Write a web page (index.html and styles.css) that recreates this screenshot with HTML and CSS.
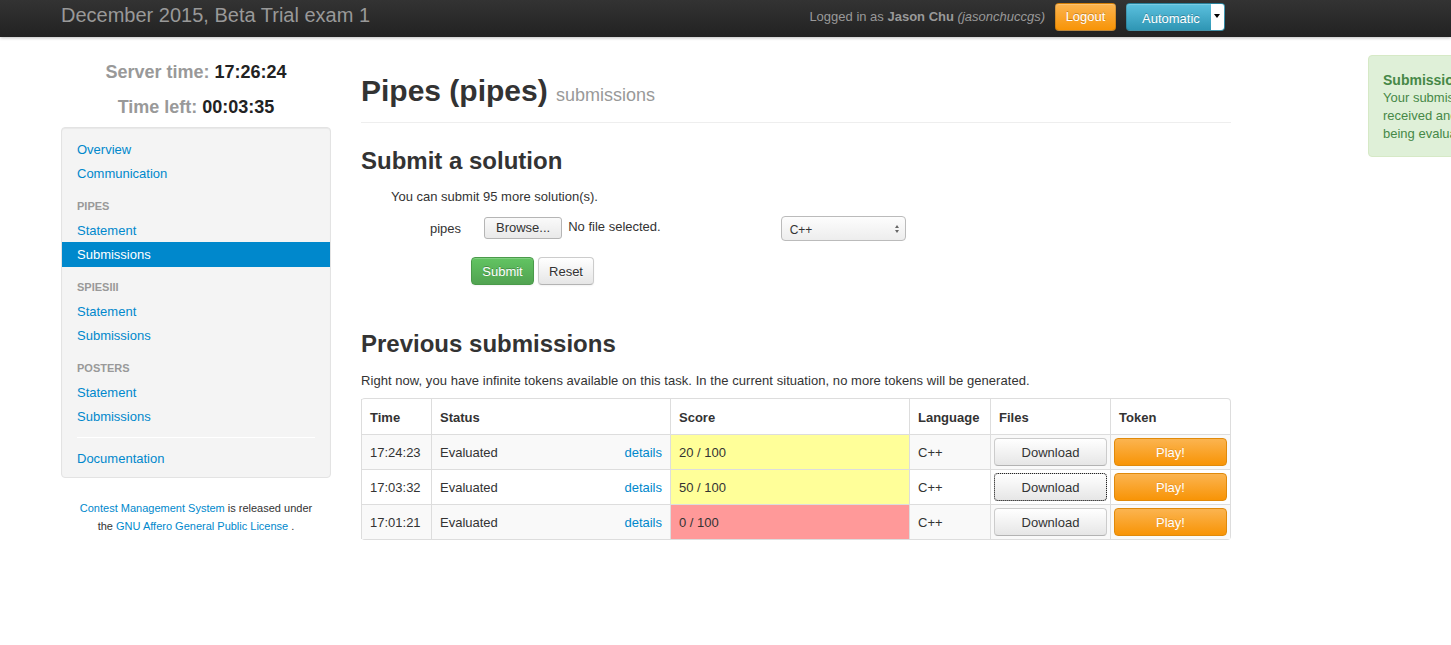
FILE: index.html
```html
<!DOCTYPE html>
<html>
<head>
<meta charset="utf-8">
<link rel="stylesheet" href="styles.css">
</head>
<body>
<div class="navbar">
  <div class="nav-inner">
    <div class="brand">December 2015, Beta Trial exam 1</div>
    <div class="nav-right">
      <span class="logged">Logged in as <b>Jason Chu</b> <i>(jasonchuccgs)</i></span>
      <span class="btn btn-warning btn-logout">Logout</span>
      <span class="btn btn-info btn-auto">Automatic<span class="caret-box"><span class="caret"></span></span></span>
    </div>
  </div>
</div>

<div class="notify">
  <div class="notify-title">Submission received</div>
  <div>Your submission has been received and is currently being evaluated.</div>
</div>

<div class="container">
  <div class="sidebar">
    <div class="clock"><span class="lbl">Server time:</span> 17:26:24</div>
    <div class="clock clock2"><span class="lbl">Time left:</span> 00:03:35</div>
    <div class="well">
      <a class="item">Overview</a>
      <a class="item">Communication</a>
      <div class="hdr">PIPES</div>
      <a class="item">Statement</a>
      <a class="item active">Submissions</a>
      <div class="hdr">SPIESIII</div>
      <a class="item">Statement</a>
      <a class="item">Submissions</a>
      <div class="hdr">POSTERS</div>
      <a class="item">Statement</a>
      <a class="item">Submissions</a>
      <div class="divider"></div>
      <a class="item">Documentation</a>
    </div>
    <div class="foot"><a>Contest Management System</a> is released under<br>the <a>GNU Affero General Public License</a> .</div>
  </div>

  <div class="main">
    <div class="page-header">
      <h1>Pipes (pipes) <small>submissions</small></h1>
    </div>
    <h2>Submit a solution</h2>
    <p class="remaining">You can submit 95 more solution(s).</p>
    <div class="form-row">
      <span class="flabel">pipes</span>
      <span class="browse">Browse...</span>
      <span class="nofile">No file selected.</span>
      <span class="select">C++<span class="arrows"><span class="up"></span><span class="down"></span></span></span>
    </div>
    <div class="actions">
      <span class="btn btn-success">Submit</span>
      <span class="btn btn-default">Reset</span>
    </div>

    <h2 class="prev">Previous submissions</h2>
    <p class="tokens">Right now, you have infinite tokens available on this task. In the current situation, no more tokens will be generated.</p>
    <table class="subs">
      <thead>
        <tr><th class="c-time">Time</th><th class="c-status">Status</th><th class="c-score">Score</th><th class="c-lang">Language</th><th class="c-files">Files</th><th class="c-token">Token</th></tr>
      </thead>
      <tbody>
        <tr class="odd"><td class="tx">17:24:23</td><td class="tx"><span class="st">Evaluated</span><a class="details">details</a></td><td class="tx partial">20 / 100</td><td class="tx">C++</td><td class="bt"><span class="dl">Download</span></td><td class="bt"><span class="play">Play!</span></td></tr>
        <tr><td class="tx">17:03:32</td><td class="tx"><span class="st">Evaluated</span><a class="details">details</a></td><td class="tx partial">50 / 100</td><td class="tx">C++</td><td class="bt"><span class="dl focus">Download</span></td><td class="bt"><span class="play">Play!</span></td></tr>
        <tr class="odd"><td class="tx">17:01:21</td><td class="tx"><span class="st">Evaluated</span><a class="details">details</a></td><td class="tx zero">0 / 100</td><td class="tx">C++</td><td class="bt"><span class="dl">Download</span></td><td class="bt"><span class="play">Play!</span></td></tr>
      </tbody>
    </table>
  </div>
</div>
</body>
</html>
```

FILE: styles.css
```css
* { box-sizing: border-box; }
html, body { margin: 0; padding: 0; }
body {
  font-family: "Liberation Sans", Arial, sans-serif;
  font-size: 13px;
  line-height: 18px;
  color: #333;
  background: #fff;
  overflow: hidden;
}
a { color: #0088cc; text-decoration: none; }

.navbar {
  height: 37px;
  background: linear-gradient(#333333, #222222);
  box-shadow: 0 1px 3px rgba(0,0,0,0.25);
}
.nav-inner {
  width: 1170px;
  margin-left: 61px;
  height: 37px;
  display: flex;
  align-items: center;
  justify-content: space-between;
}
.brand {
  font-size: 20px;
  color: #999;
  line-height: 28px;
  margin-top: -7px;
}
.nav-right {
  display: flex;
  align-items: center;
  margin-top: -3px;
  margin-right: 6px;
}
.logged { color: #999; font-size: 13px; margin-right: 10px; }
.logged b { color: #999; }
.btn {
  display: inline-flex;
  align-items: center;
  justify-content: center;
  height: 28px;
  padding: 0 10px;
  font-size: 13px;
  border-radius: 4px;
  border: 1px solid rgba(0,0,0,0.15);
  border-bottom-color: rgba(0,0,0,0.25);
  color: #fff;
  text-shadow: 0 -1px 0 rgba(0,0,0,0.25);
  box-shadow: inset 0 1px 0 rgba(255,255,255,0.2), 0 1px 2px rgba(0,0,0,0.05);
}
.btn-warning { background: linear-gradient(#fbb450, #f89406); }
.btn-logout { width: 61px; }
.btn-info { background: linear-gradient(#5bc0de, #2f96b4); }
.btn-auto {
  margin-left: 10px;
  width: 99px;
  justify-content: flex-start;
  padding: 4px 0 0 15px;
  position: relative;
}
.caret-box {
  position: absolute;
  right: 0;
  top: 0;
  bottom: 0;
  width: 13px;
  background: #fff;
  border-radius: 0 3px 3px 0;
}
.caret {
  position: absolute;
  left: 3px;
  top: 10px;
  border-left: 3px solid transparent;
  border-right: 3px solid transparent;
  border-top: 4px solid #000;
}

.notify {
  position: absolute;
  left: 1368px;
  top: 55px;
  width: 185px;
  height: 102px;
  padding: 15px 14px;
  background: #dff0d8;
  border: 1px solid #d6e9c6;
  border-radius: 4px;
  color: #468847;
  font-size: 13px;
  line-height: 18px;
}
.notify-title { font-weight: bold; font-size: 14px; white-space: nowrap; }

.container {
  margin-left: 61px;
  width: 1170px;
  display: flex;
  gap: 30px;
}
.sidebar { width: 270px; flex: none; }
.clock {
  text-align: center;
  font-size: 18px;
  font-weight: bold;
  color: #222;
  margin-top: 25px;
  line-height: 20px;
}
.clock2 { margin-top: 15px; }
.clock .lbl { color: #999; }
.well {
  margin-top: 10px;
  background: #f4f4f4;
  border: 1px solid #e3e3e3;
  border-radius: 4px;
  box-shadow: inset 0 1px 1px rgba(0,0,0,0.05);
  padding: 10px 0 6px;
}
.item {
  display: block;
  padding: 3px 15px;
  line-height: 18px;
  font-size: 13px;
  color: #0088cc;
}
.item.active {
  background: #0088cc;
  color: #fff;
  padding: 4px 15px 3px;
  margin-top: -1px;
}
.hdr {
  font-size: 11px;
  font-weight: bold;
  color: #999;
  padding: 3px 15px 4px;
  line-height: 18px;
  margin-top: 8px;
}
.divider {
  height: 1px;
  background: #e5e5e5;
  border-bottom: 1px solid #fff;
  margin: 8px 15px 9px;
}
.foot {
  text-align: center;
  font-size: 11px;
  line-height: 18px;
  margin-top: 21px;
}

.main { width: 870px; flex: none; }
.page-header {
  margin-top: 36px;
  padding-bottom: 9px;
  border-bottom: 1px solid #eee;
}
h1 {
  margin: 0;
  font-size: 30px;
  line-height: 36px;
  font-weight: bold;
  color: #333;
}
h1 small { font-size: 18px; font-weight: normal; color: #999; }
h2 {
  font-size: 24px;
  line-height: 36px;
  margin: 20px 0 0;
  font-weight: bold;
}
.remaining { margin: 9px 0 0 30px; }
.form-row {
  display: flex;
  align-items: center;
  margin-top: 10px;
  height: 26px;
}
.flabel { padding-left: 69px; box-sizing: content-box; width: 54px; }
.browse {
  display: inline-block;
  height: 22px;
  line-height: 20px;
  padding: 0 11px;
  border: 1px solid #b5b5b5;
  border-radius: 3px;
  background: linear-gradient(#fafafa, #e9e9e9);
  color: #333;
  margin-top: -3px;
}
.nofile { margin-left: 6px; margin-top: -4px; }
.select {
  margin-left: 120px;
  width: 125px;
  height: 25px;
  border: 1px solid #bbb;
  border-radius: 4px;
  background: linear-gradient(#fdfdfd, #ededed);
  font-size: 12px;
  padding-left: 8px;
  display: flex;
  align-items: center;
  justify-content: space-between;
  padding-top: 3px;
  margin-top: -1px;
}
.arrows { display: flex; flex-direction: column; gap: 2px; margin-right: 6px; margin-top: -3px; }
.up { border-left: 2px solid transparent; border-right: 2px solid transparent; border-bottom: 3px solid #666; }
.down { border-left: 2px solid transparent; border-right: 2px solid transparent; border-top: 3px solid #666; }

.actions {
  margin-top: 15px;
  margin-left: 110px;
  display: flex;
  gap: 4px;
}
.actions .btn { height: 28px; padding-top: 2px; }
.btn-success { background: linear-gradient(#62c462, #51a351); width: 63px; border-color: #4a9a4a; }
.btn-default {
  background: linear-gradient(#ffffff, #e6e6e6);
  color: #333;
  text-shadow: 0 1px 1px rgba(255,255,255,0.75);
  border: 1px solid #ccc;
  border-bottom-color: #b3b3b3;
  width: 56px;
}
h2.prev { margin-top: 41px; }
.tokens { margin: 10px 0 0; font-size: 13px; letter-spacing: 0.05px; }

.subs {
  margin-top: 8px;
  width: 870px;
  border-collapse: separate;
  border-spacing: 0;
  border: 1px solid #ddd;
  border-left: 0;
  border-radius: 4px;
}
.subs th, .subs td {
  border-left: 1px solid #ddd;
  padding: 0 8px;
  text-align: left;
  vertical-align: middle;
}
.subs th { height: 35px; font-weight: bold; padding-top: 2px; }
.subs td { border-top: 1px solid #ddd; height: 35px; }
.subs td.tx { padding-top: 2px; }
.subs tr.odd td { background: #f9f9f9; }
.c-time { width: 70px; }
.c-status { width: 239px; }
.c-score { width: 239px; }
.c-lang { width: 81px; }
.c-files { width: 120px; }
.c-token { width: 120px; }
.subs td.partial { background: #ffff99 !important; }
.subs td.zero { background: #ff9999 !important; }
.details { float: right; }
.subs td.bt { padding: 0 3px; }
.dl, .play {
  display: flex;
  align-items: center;
  justify-content: center;
  height: 28px;
  border-radius: 4px;
  font-size: 13px;
  padding-top: 1px;
}
.dl {
  background: linear-gradient(#ffffff, #e6e6e6);
  border: 1px solid #ccc;
  border-bottom-color: #b3b3b3;
  color: #333;
}
.dl.focus { outline: 1px dotted #222; outline-offset: -1px; }
.play {
  background: linear-gradient(#fbb450, #f89406);
  border: 1px solid #e08a0b;
  color: #fff;
  text-shadow: 0 -1px 0 rgba(0,0,0,0.1);
}
```
